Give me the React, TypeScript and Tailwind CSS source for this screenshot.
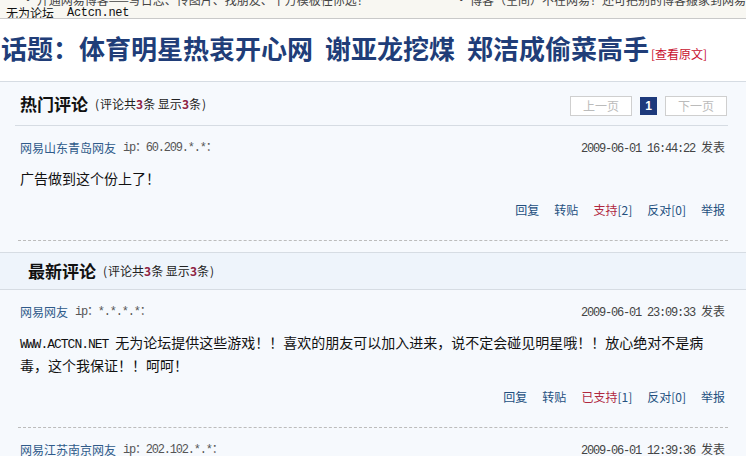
const cjk = "font-['Noto_Sans_CJK_SC',sans-serif]";
const mono = "font-['Liberation_Mono','Noto_Sans_CJK_SC',monospace]";

const Count = () => (
  <span className="ml-[7px] text-[12px] font-normal text-[#222]">
    <span className="mr-[1px]">(</span>评论共<span className="font-bold text-[#8e2445]">3</span>条 显示
    <span className="font-bold text-[#8e2445]">3</span>条<span className="ml-[1px]">)</span>
  </span>
);

const Comment = ({ user, ip, time, content, support, supported, against }: any) => (
  <div className="mx-[18px] border-b border-dashed border-[#bcbcbc] pl-[2px] pr-[3px] pt-[10px] pb-[20px]">
    <div className="flex h-[24px] items-center justify-between text-[12px]">
      <div className="flex items-center">
        <span className="text-[#2f5b8a]">{user}</span>
        <span className={`ml-[7px] text-[#555] ${mono} tracking-[-1.2px]`}>ip：{ip}：</span>
      </div>
      <span className="text-[#444]">
        <span className={`${mono} tracking-[-1.2px]`}>{time}&nbsp;</span>
        <span>发表</span>
      </span>
    </div>
    {content && (
      <div className="mt-[8px] text-[14px] leading-[20px] text-[#111]">{content}</div>
    )}
    {content && (
      <div className="mt-[12px] flex h-[20px] items-center justify-end gap-[15px] text-[12px] text-[#24507f]">
        <span>回复</span>
        <span>转贴</span>
        <span>
          <span className="text-[#b0283f]">{supported ? "已支持" : "支持"}</span>[{support}]
        </span>
        <span>反对[{against}]</span>
        <span>举报</span>
      </div>
    )}
  </div>
);

export default function App() {
  return (
    <div className={`relative h-[456px] w-[746px] overflow-hidden bg-white ${cjk}`}>
      {/* top strip */}
      <div className="relative h-[19px] overflow-hidden border-b border-[#c9c9c9] bg-[#f8f7f2]">
        <div className="-mt-[7px] flex text-[12px] leading-[14px] text-[#444]">
          <span className="w-[494px] pl-[22px]">• 开通网易博客——写日志、传图片、找朋友、千万模板任你选！</span>
          <span className="whitespace-nowrap pl-[10px]">• 博客（空间）不在网易！还可把别的博客搬家到网易</span>
        </div>
        <div className="absolute left-[6px] top-[7px] flex items-end text-[12px] leading-[12px] text-[#111]">
          <span>无为论坛</span>
          <span className={`ml-[13px] ${mono} tracking-[-0.3px]`}>Actcn.net</span>
        </div>
      </div>

      {/* title */}
      <div className="flex h-[62px] items-center pl-[1px] pt-[1px]">
        <h1 className="whitespace-nowrap text-[26px] font-bold leading-[30px] text-[#203d78]">
          话题：体育明星热衷开心网<span className="ml-[12px]">谢亚龙挖煤</span>
          <span className="ml-[12px]">郑洁成偷菜高手</span>
          <span className="ml-[2px] text-[12px] font-normal text-[#c8102e]">[查看原文]</span>
        </h1>
      </div>

      {/* comments panel */}
      <div className="border-t border-[#d6dce3] bg-[#f6f9fd]">
        <div className="ml-[15px] mr-[18px] flex h-[44px] items-center justify-between border-b border-[#d6dce3] pl-[5px] pr-[1px]">
          <div className="flex items-center">
            <span className="text-[17px] font-bold text-[#111]">热门评论</span>
            <Count />
          </div>
          <div className="mt-[5px] flex items-center gap-[8px] text-[12px]">
            <span className="flex h-[20px] w-[62px] items-center justify-center border border-[#cfcfcf] bg-white text-[#bbb]">上一页</span>
            <span className="flex h-[18px] w-[17px] items-center justify-center bg-[#1e3a7c] font-['Liberation_Sans'] font-bold text-white">1</span>
            <span className="flex h-[20px] w-[62px] items-center justify-center border border-[#cfcfcf] bg-white text-[#bbb]">下一页</span>
          </div>
        </div>

        <Comment
          user="网易山东青岛网友"
          ip="60.209.*.*"
          time="2009-06-01 16:44:22"
          content="广告做到这个份上了！"
          support={2}
          against={0}
        />

        <div className="mt-[11px] flex h-[38px] items-center border-y border-[#d6dce3] bg-[#eef4fb] pl-[28px]">
          <span className="text-[17px] font-bold text-[#111]">最新评论</span>
          <Count />
        </div>

        <Comment
          user="网易网友"
          ip="*.*.*.*"
          time="2009-06-01 23:09:33"
          content={
            <>
              <span className={`${mono} text-[13px] tracking-[-1px]`}>WWW.ACTCN.NET&nbsp;</span>
              <span>无为论坛提供这些游戏！！喜欢的朋友可以加入进来，说不定会碰见明星哦！！放心绝对不是病</span>
              <br />
              毒，这个我保证！！呵呵！
            </>
          }
          support={1}
          supported
          against={0}
        />

        <Comment user="网易江苏南京网友" ip="202.102.*.*" time="2009-06-01 12:39:36" />
      </div>
    </div>
  );
}
